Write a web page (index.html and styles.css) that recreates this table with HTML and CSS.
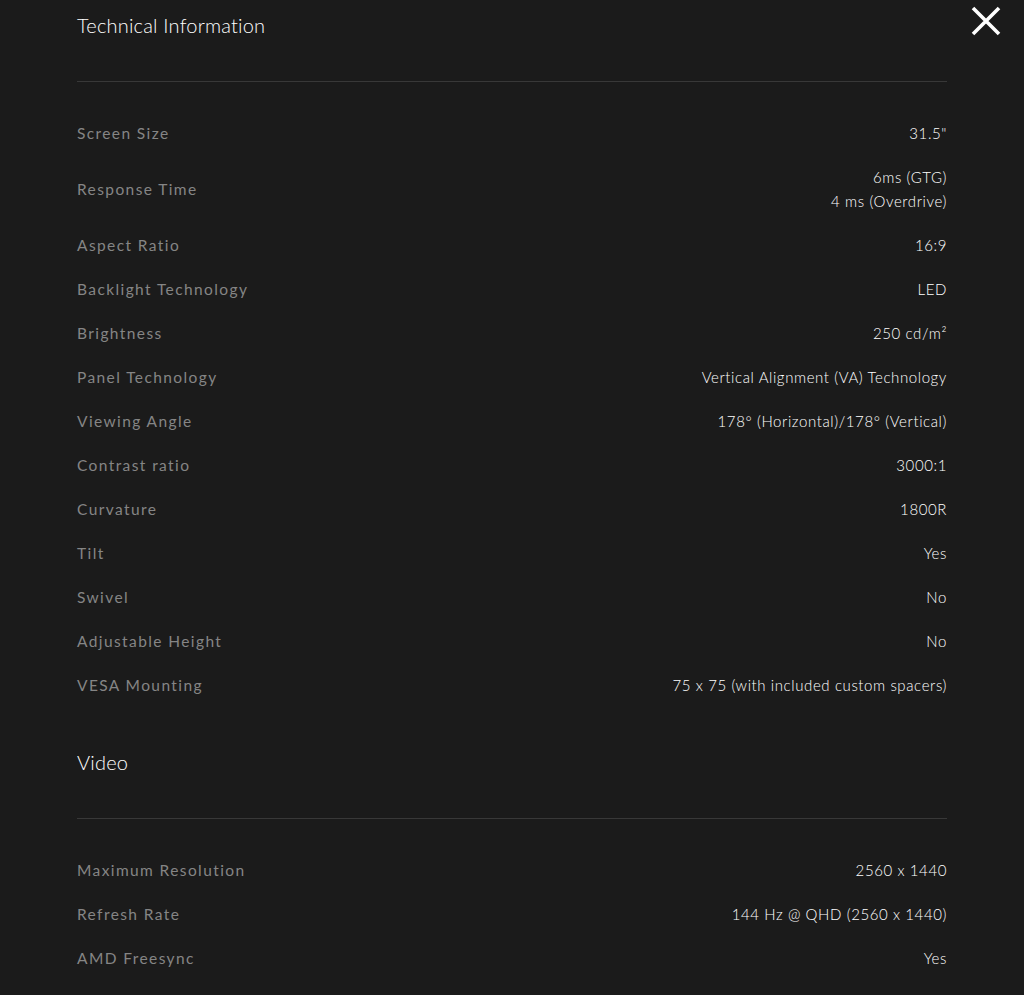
FILE: index.html
```html
<!DOCTYPE html>
<html lang="en">
<head>
<meta charset="utf-8">
<title>Technical Information</title>
<link rel="stylesheet" href="styles.css">
</head>
<body>
<div class="panel">
  <button class="close" aria-label="Close">
    <svg width="30" height="30" viewBox="0 0 30 30"><path d="M2 2 L28 28 M28 2 L2 28" stroke="#fff" stroke-width="3.6" fill="none"/></svg>
  </button>
  <section class="section">
    <h2 class="section-title">Technical Information</h2>
    <div class="rows">
      <div class="row"><span class="label">Screen Size</span><span class="value">31.5"</span></div>
      <div class="row"><span class="label">Response Time</span><span class="value">6ms (GTG)<br>4 ms (Overdrive)</span></div>
      <div class="row"><span class="label">Aspect Ratio</span><span class="value">16:9</span></div>
      <div class="row"><span class="label">Backlight Technology</span><span class="value">LED</span></div>
      <div class="row"><span class="label">Brightness</span><span class="value">250 cd/m²</span></div>
      <div class="row"><span class="label">Panel Technology</span><span class="value">Vertical Alignment (VA) Technology</span></div>
      <div class="row"><span class="label">Viewing Angle</span><span class="value">178° (Horizontal)/178° (Vertical)</span></div>
      <div class="row"><span class="label">Contrast ratio</span><span class="value">3000:1</span></div>
      <div class="row"><span class="label">Curvature</span><span class="value">1800R</span></div>
      <div class="row"><span class="label">Tilt</span><span class="value">Yes</span></div>
      <div class="row"><span class="label">Swivel</span><span class="value">No</span></div>
      <div class="row"><span class="label">Adjustable Height</span><span class="value">No</span></div>
      <div class="row"><span class="label">VESA Mounting</span><span class="value">75 x 75 (with included custom spacers)</span></div>
    </div>
  </section>
  <section class="section">
    <h2 class="section-title">Video</h2>
    <div class="rows">
      <div class="row"><span class="label">Maximum Resolution</span><span class="value">2560 x 1440</span></div>
      <div class="row"><span class="label">Refresh Rate</span><span class="value">144 Hz @ QHD (2560 x 1440)</span></div>
      <div class="row"><span class="label">AMD Freesync</span><span class="value">Yes</span></div>
    </div>
  </section>
</div>
</body>
</html>
```
FILE: styles.css
```css
html, body {
  margin: 0;
  padding: 0;
  background: #1b1b1b;
  height: 100%;
  overflow: hidden;
}
body {
  font-family: "Lato", "Open Sans", sans-serif;
  color: #ececec;
}
.panel {
  position: relative;
  padding: 10px 77px 0 77px;
}
.close {
  position: absolute;
  top: 6px;
  right: 23px;
  width: 30px;
  height: 30px;
  padding: 0;
  border: 0;
  background: none;
  cursor: pointer;
}
.close svg { display: block; }
.section-title {
  margin: 0;
  padding: 0 0 41px;
  font-size: 20px;
  line-height: 30px;
  font-weight: 300;
  letter-spacing: 0.2px;
  color: #ffffff;
  border-bottom: 1px solid #383838;
}
.rows {
  padding: 29px 0 40px;
}
.row {
  display: flex;
  justify-content: space-between;
  align-items: center;
  padding: 10px 0;
  line-height: 24px;
}
.label {
  font-size: 15.5px;
  letter-spacing: 1.4px;
  color: #858585;
}
.value {
  font-size: 15px;
  font-weight: 300;
  letter-spacing: 0.6px;
  text-align: right;
  color: #ffffff;
}
```
